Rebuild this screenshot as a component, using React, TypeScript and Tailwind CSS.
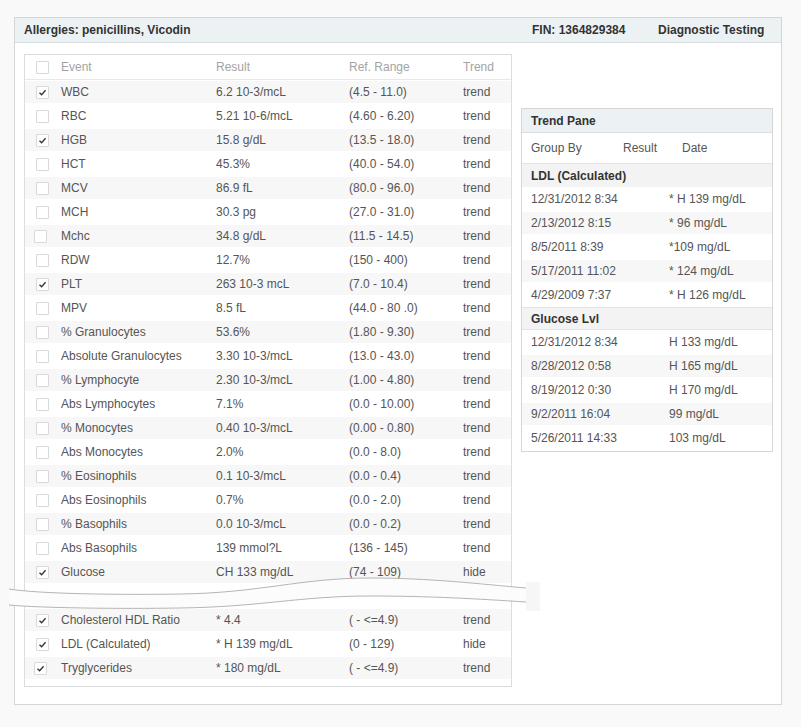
import React from "react";

type Row = { c: boolean; e: string; r: string; g: string; t: string; off?: boolean };

const top: Row[] = [
  { c: true, e: "WBC", r: "6.2 10-3/mcL", g: "(4.5 - 11.0)", t: "trend" },
  { c: false, e: "RBC", r: "5.21 10-6/mcL", g: "(4.60 - 6.20)", t: "trend" },
  { c: true, e: "HGB", r: "15.8 g/dL", g: "(13.5 - 18.0)", t: "trend" },
  { c: false, e: "HCT", r: "45.3%", g: "(40.0 - 54.0)", t: "trend" },
  { c: false, e: "MCV", r: "86.9 fL", g: "(80.0 - 96.0)", t: "trend" },
  { c: false, e: "MCH", r: "30.3 pg", g: "(27.0 - 31.0)", t: "trend" },
  { c: false, e: "Mchc", r: "34.8 g/dL", g: "(11.5 - 14.5)", t: "trend", off: true },
  { c: false, e: "RDW", r: "12.7%", g: "(150 - 400)", t: "trend" },
  { c: true, e: "PLT", r: "263 10-3 mcL", g: "(7.0 - 10.4)", t: "trend" },
  { c: false, e: "MPV", r: "8.5 fL", g: "(44.0 - 80 .0)", t: "trend" },
  { c: false, e: "% Granulocytes", r: "53.6%", g: "(1.80 - 9.30)", t: "trend" },
  { c: false, e: "Absolute Granulocytes", r: "3.30 10-3/mcL", g: "(13.0 - 43.0)", t: "trend" },
  { c: false, e: "% Lymphocyte", r: "2.30 10-3/mcL", g: "(1.00 - 4.80)", t: "trend" },
  { c: false, e: "Abs Lymphocytes", r: "7.1%", g: "(0.0 - 10.00)", t: "trend" },
  { c: false, e: "% Monocytes", r: "0.40 10-3/mcL", g: "(0.00 - 0.80)", t: "trend" },
  { c: false, e: "Abs Monocytes", r: "2.0%", g: "(0.0 - 8.0)", t: "trend" },
  { c: false, e: "% Eosinophils", r: "0.1 10-3/mcL", g: "(0.0 - 0.4)", t: "trend" },
  { c: false, e: "Abs Eosinophils", r: "0.7%", g: "(0.0 - 2.0)", t: "trend" },
  { c: false, e: "% Basophils", r: "0.0 10-3/mcL", g: "(0.0 - 0.2)", t: "trend" },
  { c: false, e: "Abs Basophils", r: "139 mmol?L", g: "(136 - 145)", t: "trend" },
  { c: true, e: "Glucose", r: "CH 133 mg/dL", g: "(74 - 109)", t: "hide" },
];

const bottom: Row[] = [
  { c: true, e: "Cholesterol HDL Ratio", r: "* 4.4", g: "( - <=4.9)", t: "trend" },
  { c: true, e: "LDL (Calculated)", r: "* H 139 mg/dL", g: "(0 - 129)", t: "hide" },
  { c: true, e: "Tryglycerides", r: "* 180 mg/dL", g: "( - <=4.9)", t: "trend", off: true },
];

const ldl = [
  ["12/31/2012 8:34", "* H 139 mg/dL"],
  ["2/13/2012 8:15", "* 96 mg/dL"],
  ["8/5/2011 8:39", "*109 mg/dL"],
  ["5/17/2011 11:02", "* 124 mg/dL"],
  ["4/29/2009 7:37", "* H 126 mg/dL"],
];
const glu = [
  ["12/31/2012 8:34", "H 133 mg/dL"],
  ["8/28/2012 0:58", "H 165 mg/dL"],
  ["8/19/2012 0:30", "H 170 mg/dL"],
  ["9/2/2011 16:04", "99 mg/dL"],
  ["5/26/2011 14:33", "103 mg/dL"],
];

function Box({ checked, off }: { checked: boolean; off?: boolean }) {
  return (
    <div
      className={
        "w-[13px] h-[13px] border border-[#d9d9d9] bg-white rounded-[1px] flex items-center justify-center " +
        (off ? "ml-[-2px]" : "")
      }
    >
      {checked && (
        <svg width="11" height="11" viewBox="0 0 11 11">
          <polyline points="2.5,5.8 4.6,7.8 8.6,3.2" fill="none" stroke="#333" strokeWidth="1.3" />
        </svg>
      )}
    </div>
  );
}

function TRow({ row, shaded }: { row: Row; shaded: boolean }) {
  return (
    <div className="h-[24px] py-[1px]">
      <div className={"h-[22px] flex items-center " + (shaded ? "bg-[#f7f7f7]" : "")}>
        <div className="w-[36px] pl-[11px] flex items-center">
          <Box checked={row.c} off={row.off} />
        </div>
        <div className="w-[155px]">{row.e}</div>
        <div className="w-[133px]">{row.r}</div>
        <div className="w-[114px]">{row.g}</div>
        <div>{row.t}</div>
      </div>
    </div>
  );
}

export default function App() {
  return (
    <div
      className="relative w-[801px] h-[727px] bg-[#f9f9f9] overflow-hidden text-[12px] text-[#555]"
      style={{ fontFamily: '"Liberation Sans", Arial, sans-serif' }}
    >
      <div className="pt-[17px] pl-[14px]">
        <div className="w-[768px] h-[688px] border border-[#d6d6d6] bg-white">
          {/* header */}
          <div className="h-[25px] bg-[#ecf2f4] border-b border-[#d9e0e3] flex items-center font-bold text-[#333]">
            <div className="w-[517px] pl-[9px]">Allergies: penicillins, Vicodin</div>
            <div className="w-[126px]">FIN: 1364829384</div>
            <div>Diagnostic Testing</div>
          </div>
          <div className="flex items-start pl-[9px] pt-[11px]">
            {/* table */}
            <div className="w-[488px] border border-[#dcdcdc] bg-white pb-[6px]">
              <div className="h-[25px] border-b border-[#e8e8e8] flex items-center text-[#a3a3a3]">
                <div className="w-[36px] pl-[11px] flex items-center">
                  <Box checked={false} />
                </div>
                <div className="w-[155px]">Event</div>
                <div className="w-[133px]">Result</div>
                <div className="w-[114px]">Ref. Range</div>
                <div>Trend</div>
              </div>
              {top.map((r, i) => (
                <TRow key={r.e} row={r} shaded={i % 2 === 0} />
              ))}
              <div className="h-[24px]" />
              {bottom.map((r, i) => (
                <TRow key={r.e} row={r} shaded={i % 2 === 0} />
              ))}
            </div>
            {/* trend pane */}
            <div className="ml-[9px] mt-[54px] w-[252px] border border-[#d6d6d6] bg-white pb-[1px]">
              <div className="h-[24px] bg-[#ecf2f4] border-b border-[#d9e0e3] flex items-center pl-[9px] font-bold text-[#333]">
                Trend Pane
              </div>
              <div className="h-[31px] border-b border-[#e3e3e3] flex items-center pl-[9px]">
                <div className="w-[92px]">Group By</div>
                <div className="w-[59px]">Result</div>
                <div>Date</div>
              </div>
              <div className="h-[23px] bg-[#f3f3f3] flex items-center pl-[9px] font-bold text-[#333]">
                LDL (Calculated)
              </div>
              {ldl.map((d, i) => (
                <div key={d[0]} className="h-[24px] py-[1px]">
                  <div className={"h-[22px] flex items-center pl-[9px] " + (i % 2 === 1 ? "bg-[#f7f7f7]" : "")}>
                    <div className="w-[138px]">{d[0]}</div>
                    <div>{d[1]}</div>
                  </div>
                </div>
              ))}
              <div className="h-[23px] bg-[#f3f3f3] border-y border-[#e3e3e3] flex items-center pl-[9px] font-bold text-[#333]">
                Glucose Lvl
              </div>
              {glu.map((d, i) => (
                <div key={d[0]} className="h-[24px] py-[1px]">
                  <div className={"h-[22px] flex items-center pl-[9px] " + (i % 2 === 1 ? "bg-[#f7f7f7]" : "")}>
                    <div className="w-[138px]">{d[0]}</div>
                    <div>{d[1]}</div>
                  </div>
                </div>
              ))}
            </div>
          </div>
        </div>
      </div>
      {/* torn break */}
      <svg
        className="absolute left-0 top-[570px] pointer-events-none"
        width="550"
        height="50"
        viewBox="0 570 550 50"
      >
        <rect x="526" y="582" width="14" height="29" fill="#f6f6f6" />
        <path
          d="M9,589 C40,594 120,595 180,594 C260,593 300,578 370,578 C430,578 480,584 526,588 L526,602 C480,599 430,596 370,596 C300,596 260,607 180,608 C120,609 40,608 9,605 Z"
          fill="#fcfcfc"
        />
        <path
          d="M9,589 C40,594 120,595 180,594 C260,593 300,578 370,578 C430,578 480,584 526,588"
          fill="none"
          stroke="#b5b5b5"
          strokeWidth="1"
        />
        <path
          d="M9,605 C40,608 120,609 180,608 C260,607 300,596 370,596 C430,596 480,599 526,602"
          fill="none"
          stroke="#b5b5b5"
          strokeWidth="1"
        />
      </svg>
    </div>
  );
}
